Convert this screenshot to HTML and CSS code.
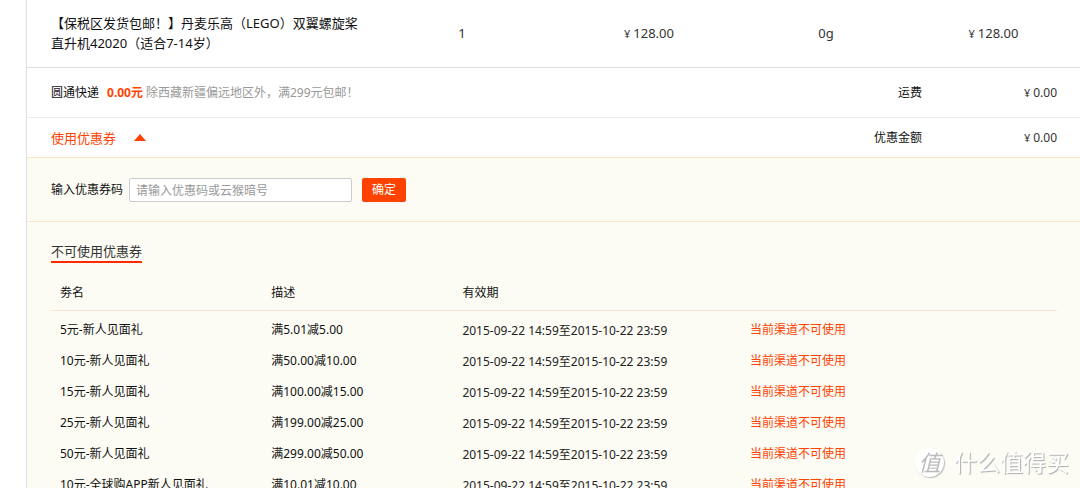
FILE: index.html
```html
<!DOCTYPE html>
<html lang="zh-CN">
<head>
<meta charset="utf-8">
<title>确认订单</title>
<link rel="stylesheet" href="styles.css">
</head>
<body>
<main class="order">
  <section class="product">
    <div class="product-name">【保税区发货包邮！】丹麦乐高（LEGO）双翼螺旋桨直升机42020（适合7-14岁）</div>
    <div class="cell">1</div>
    <div class="cell"><span class="yen">¥</span>128.00</div>
    <div class="cell">0g</div>
    <div class="cell"><span class="yen">¥</span>128.00</div>
  </section>
  <section class="fee shipping">
    <div class="fee-info"><span>圆通快递</span><strong class="fee-price">0.00元</strong><span class="fee-note">除西藏新疆偏远地区外，满299元包邮！</span></div>
    <div class="fee-label">运费</div>
    <div class="fee-value"><span class="yen">¥</span>0.00</div>
  </section>
  <section class="fee coupon">
    <div class="fee-info"><button class="toggle" type="button" aria-expanded="true">使用优惠券<svg class="arrow" viewBox="0 0 12 7" aria-hidden="true"><path d="M6 0L12 7H0Z"/></svg></button></div>
    <div class="fee-label">优惠金额</div>
    <div class="fee-value"><span class="yen">¥</span>0.00</div>
  </section>
  <section class="panel">
    <form class="code-form">
      <label for="code">输入优惠券码</label>
      <input class="code-input" id="code" type="text" placeholder="请输入优惠码或云猴暗号">
      <button class="submit" type="button">确定</button>
    </form>
    <div class="list">
      <h2 class="list-title">不可使用优惠券</h2>
      <table class="coupons">
        <thead>
          <tr><th class="col-name">劵名</th><th class="col-desc">描述</th><th class="col-date">有效期</th><th></th></tr>
        </thead>
        <tbody>
          <tr><td>5元-新人见面礼</td><td>满5.01减5.00</td><td class="date">2015-09-22 14:59至2015-10-22 23:59</td><td class="status">当前渠道不可使用</td></tr>
          <tr><td>10元-新人见面礼</td><td>满50.00减10.00</td><td class="date">2015-09-22 14:59至2015-10-22 23:59</td><td class="status">当前渠道不可使用</td></tr>
          <tr><td>15元-新人见面礼</td><td>满100.00减15.00</td><td class="date">2015-09-22 14:59至2015-10-22 23:59</td><td class="status">当前渠道不可使用</td></tr>
          <tr><td>25元-新人见面礼</td><td>满199.00减25.00</td><td class="date">2015-09-22 14:59至2015-10-22 23:59</td><td class="status">当前渠道不可使用</td></tr>
          <tr><td>50元-新人见面礼</td><td>满299.00减50.00</td><td class="date">2015-09-22 14:59至2015-10-22 23:59</td><td class="status">当前渠道不可使用</td></tr>
          <tr><td>10元-全球购APP新人见面礼</td><td>满10.01减10.00</td><td class="date">2015-09-22 14:59至2015-10-22 23:59</td><td class="status">当前渠道不可使用</td></tr>
        </tbody>
      </table>
    </div>
  </section>
</main>
<div class="watermark"><span class="seal">值</span><span class="brand">什么值得买</span></div>
</body>
</html>
```

FILE: styles.css
```css
* { box-sizing: border-box; }

html { scrollbar-width: none; }

body {
  margin: 0;
  background: #fff;
  color: #111;
  font: 12px/20px "Noto Sans", "Noto Sans CJK SC", sans-serif;
}

button, input { font: inherit; }

.order {
  margin-left: 26px;
  border-left: 1px solid #dcdfe2;
}

.product {
  display: grid;
  grid-template-columns: 344fr 182fr 192fr 162fr 173fr;
  align-items: center;
  padding: 13px 0 14px;
  border-bottom: 1px solid #dedede;
  font-size: 13px;
}

.product-name { padding: 0 10px 0 24px; }

.cell {
  text-align: center;
  color: #333;
}

.yen {
  margin-right: 3px;
  font-size: 11px;
}

.fee {
  display: grid;
  grid-template-columns: 1fr 100px 135px;
  align-items: center;
  padding: 0 23px 0 24px;
}

.shipping {
  min-height: 50px;
  border-bottom: 1px solid #ececec;
}

.coupon {
  min-height: 40px;
  border-bottom: 1px solid #fde6bf;
}

.fee-price {
  margin: 0 3px 0 8px;
  color: #ff4200;
}

.fee-note { color: #999; }

.fee-label, .fee-value { text-align: right; }

.fee-value { color: #333; }

.toggle {
  display: flex;
  align-items: center;
  gap: 18px;
  padding: 0;
  border: 0;
  background: none;
  color: #ff4200;
  font-size: 13px;
}

.arrow {
  width: 12px;
  height: 7px;
  fill: #ff4200;
}

.panel { background: #fcfcf5; }

.code-form {
  display: flex;
  align-items: center;
  padding: 20px 24px 19px;
  border-bottom: 1px solid #fae6c3;
}

.code-input {
  width: 223px;
  height: 24px;
  margin: 0 10px 0 6px;
  padding: 0 6px;
  border: 1px solid #ccc;
  border-radius: 2px;
  background: #fff;
}

.code-input::placeholder { color: #999; }

.submit {
  height: 24px;
  padding: 0 10px;
  border: 0;
  border-radius: 2px;
  background: #ff4200;
  color: #fff;
}

.list { padding: 19px 23px 0 24px; }

.list-title {
  width: fit-content;
  margin: 0 0 12px;
  border-bottom: 2px solid #ff2a00;
  color: #333;
  font-weight: 400;
  font-size: 13px;
}

.coupons {
  width: 100%;
  border-collapse: collapse;
  table-layout: fixed;
}

.coupons th {
  height: 35px;
  padding: 1px 9px 0;
  border-bottom: 1px solid #fde6cd;
  font-weight: 400;
  text-align: left;
}

.col-name { width: 21%; }
.col-desc { width: 19%; }
.col-date { width: 28.6%; }

.coupons tbody::before {
  content: "";
  display: block;
  height: 4px;
}

.coupons td {
  height: 31px;
  padding: 0 9px;
  white-space: nowrap;
}

.coupons .date {
  padding-top: 2px;
  color: #222;
}

.coupons .status { color: #ff4200; }

.watermark {
  position: fixed;
  right: 11px;
  bottom: 10px;
  display: flex;
  align-items: center;
  gap: 10px;
  height: 32px;
  color: #fff;
  text-shadow: 1px 1px 1px #aaa;
}

.seal {
  width: 29px;
  height: 29px;
  border-radius: 50%;
  background: #fff;
  box-shadow: 1px 1px 1px #bbb;
  color: #bbb;
  font-size: 22px;
  font-style: italic;
  line-height: 28px;
  text-align: center;
  text-shadow: none;
}

.brand { font-size: 23px; }
```
